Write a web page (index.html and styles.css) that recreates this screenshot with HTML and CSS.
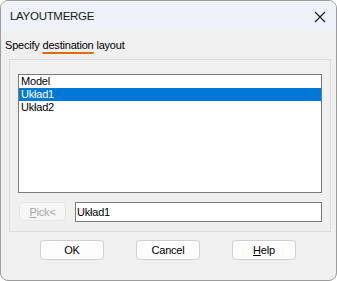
FILE: index.html
```html
<!DOCTYPE html>
<html lang="pl">
<head>
  <meta charset="UTF-8" />
  <title>LAYOUTMERGE</title>
  <link rel="stylesheet" href="styles.css">
</head>
<body>
  <div class="window">
    <div class="titlebar">
      <span class="title">LAYOUTMERGE</span>
      <svg class="close" width="12" height="12" viewBox="0 0 12 12">
        <path d="M1 1 L11 11 M11 1 L1 11" stroke="#1a1a1a" stroke-width="1.1" fill="none" />
      </svg>
    </div>

    <div class="content">
      <div class="prompt">Specify <span class="hl">destination</span> layout</div>

      <div class="group">
        <ul class="listbox">
          <li>Model</li>
          <li class="selected">Układ1</li>
          <li>Układ2</li>
        </ul>
        <div class="pick-row">
          <button class="btn pick" disabled><u>P</u>ick&lt;</button>
          <div class="edit">Układ1</div>
        </div>
      </div>

      <div class="buttons">
        <button class="btn">OK</button>
        <button class="btn">Cancel</button>
        <button class="btn"><u>H</u>elp</button>
      </div>
    </div>
  </div>
</body>
</html>
```

FILE: styles.css
```css
body {
  margin: 0;
  font-family: "Liberation Sans", Arial, sans-serif;
  font-size: 11px;
  color: #000;
  background: #fff;
}

.window {
  width: 337px;
  height: 281px;
  box-sizing: border-box;
  border: 1px solid #9c9c9c;
  border-radius: 8px;
  overflow: hidden;
  background: #f0f0f0;
  display: flex;
  flex-direction: column;
}

.titlebar {
  height: 30px;
  flex: none;
  background: #eef3fa;
  display: flex;
  align-items: center;
  justify-content: space-between;
  padding: 0 10px 0 9px;
}

.title {
  font-size: 11.5px;
  letter-spacing: -0.3px;
  color: #1a1a1a;
}

.close {
  margin-top: 1px;
}

.content {
  flex: 1;
  display: flex;
  flex-direction: column;
}

.prompt {
  height: 28px;
  line-height: 28px;
  padding-left: 4px;
  font-size: 11px;
  letter-spacing: -0.2px;
}

.hl {
  text-decoration: underline;
  text-decoration-color: #e06c00;
  text-decoration-thickness: 2px;
  text-underline-offset: 3px;
}

.group {
  margin-left: 8px;
  width: 322px;
  height: 173px;
  box-sizing: border-box;
  border: 1px solid #dcdcdc;
  padding: 14px 0 0 8px;
}

.listbox {
  list-style: none;
  margin: 0;
  padding: 0;
  width: 304px;
  height: 119px;
  box-sizing: border-box;
  border: 1px solid #7a7a7a;
  background: #fff;
}

.listbox li {
  height: 13px;
  line-height: 13px;
  padding-left: 2px;
  letter-spacing: -0.2px;
}

.listbox li.selected {
  background: #0078d7;
  color: #fff;
}

.pick-row {
  display: flex;
  gap: 9px;
  margin-top: 9px;
  padding-left: 1px;
}

.btn {
  font-family: inherit;
  font-size: 11px;
  letter-spacing: -0.2px;
  height: 20px;
  width: 64px;
  padding: 0;
  border: 1px solid #d0d0d0;
  border-radius: 4px;
  background: #fdfdfd;
  color: #000;
}

.btn.pick {
  width: 47px;
  height: 19px;
  border-color: #e6e6e6;
  background: #f6f6f6;
  color: #a8a8a8;
}

.edit {
  width: 247px;
  height: 20px;
  box-sizing: border-box;
  border: 1px solid #7a7a7a;
  background: #fff;
  line-height: 18px;
  padding-left: 1px;
  letter-spacing: -0.2px;
}

.buttons {
  display: flex;
  gap: 32px;
  margin-top: 8px;
  padding-left: 39px;
}
```
